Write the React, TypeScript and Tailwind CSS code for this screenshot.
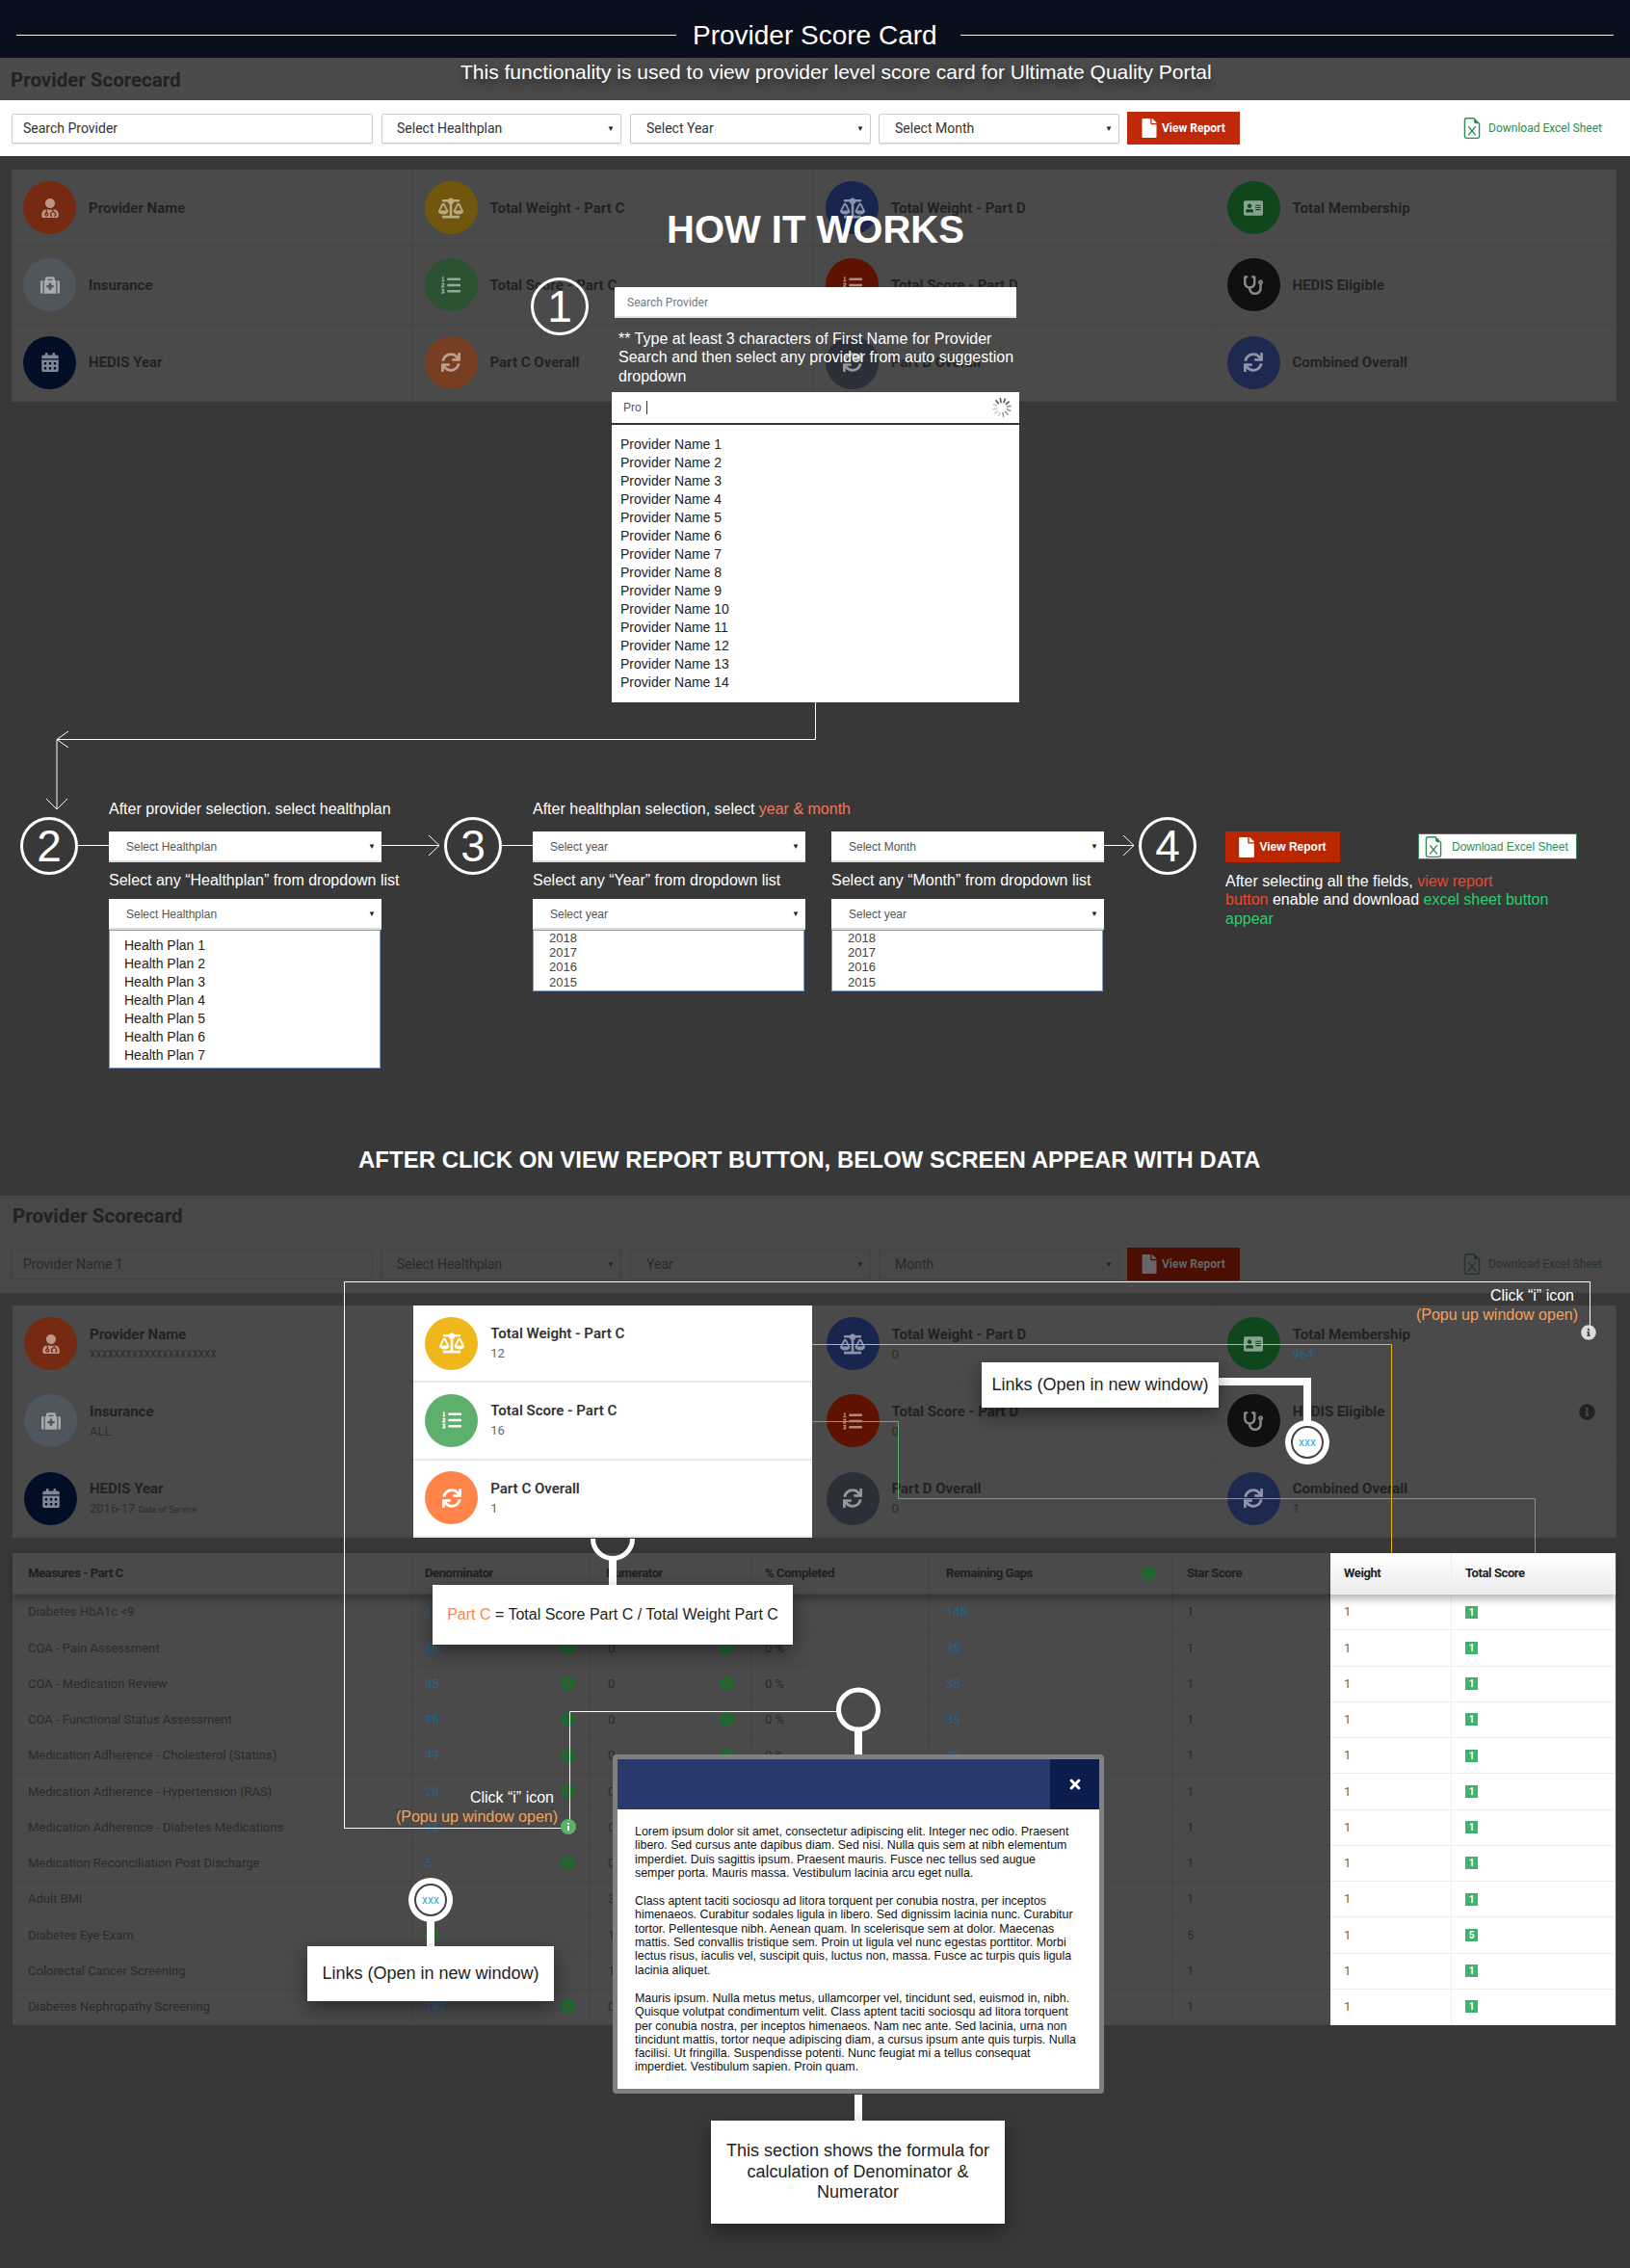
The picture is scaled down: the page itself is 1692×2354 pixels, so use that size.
import type { ReactNode } from 'react';
import {
  FaBalanceScale,
  FaListOl,
  FaSync,
  FaUserMd,
  FaMedkit,
  FaCalendarAlt,
  FaAddressCard,
  FaStethoscope,
  FaInfoCircle,
  FaFile,
  FaTimes,
} from 'react-icons/fa';
import { BsFileEarmarkExcel } from 'react-icons/bs';

const ARIAL = "font-['Liberation_Sans',Arial,sans-serif]";

const PROVIDERS = Array.from({ length: 14 }, (_, i) => `Provider Name ${i + 1}`);
const PLANS = Array.from({ length: 7 }, (_, i) => `Health Plan ${i + 1}`);
const YEARS = ['2018', '2017', '2016', '2015'];

const CARDS = [
  { label: 'Provider Name', value: 'XXXXXXXXXXXXXXXXXXXXX', icon: FaUserMd, dim: 'bg-[#762a12]', strike: true },
  { label: 'Total Weight - Part C', value: '12', icon: FaBalanceScale, dim: 'bg-[#71560d]', bright: 'bg-[#f0b71c]' },
  { label: 'Total Weight - Part D', value: '0', icon: FaBalanceScale, dim: 'bg-[#18264f]' },
  { label: 'Total Membership', value: '964', icon: FaAddressCard, dim: 'bg-[#0f461c]', link: true },
  { label: 'Insurance', value: 'ALL', icon: FaMedkit, dim: 'bg-[#50565d]' },
  { label: 'Total Score - Part C', value: '16', icon: FaListOl, dim: 'bg-[#2b5332]', bright: 'bg-[#5cb06b]' },
  { label: 'Total Score - Part D', value: '0', icon: FaListOl, dim: 'bg-[#5f1200]' },
  { label: 'HEDIS Eligible', value: '', icon: FaStethoscope, dim: 'bg-[#101010]' },
  { label: 'HEDIS Year', value: '2016-17', note: 'Date of Service', icon: FaCalendarAlt, dim: 'bg-[#020e26]' },
  { label: 'Part C Overall', value: '1', icon: FaSync, dim: 'bg-[#783e22]', bright: 'bg-[#ff8449]' },
  { label: 'Part D Overall', value: '0', icon: FaSync, dim: 'bg-[#2a2f38]' },
  { label: 'Combined Overall', value: '1', icon: FaSync, dim: 'bg-[#1e2950]' },
];

const MEASURES = [
  { name: 'Diabetes HbA1c <9', den: '145', num: '0', gaps: '145', star: '1', score: '1' },
  { name: 'COA - Pain Assessment', den: '36', num: '0', gaps: '35', star: '1', score: '1' },
  { name: 'COA - Medication Review', den: '35', num: '0', gaps: '35', star: '1', score: '1' },
  { name: 'COA - Functional Status Assessment', den: '35', num: '0', gaps: '35', star: '1', score: '1' },
  { name: 'Medication Adherence - Cholesterol (Statins)', den: '49', num: '0', gaps: '49', star: '1', score: '1' },
  { name: 'Medication Adherence - Hypertension (RAS)', den: '28', num: '0', gaps: '28', star: '1', score: '1' },
  { name: 'Medication Adherence - Diabetes Medications', den: '35', num: '0', gaps: '35', star: '1', score: '1' },
  { name: 'Medication Reconciliation Post Discharge', den: '5', num: '0', gaps: '5', star: '1', score: '1' },
  { name: 'Adult BMI', den: '', num: '3', gaps: '30', star: '1', score: '1' },
  { name: 'Diabetes Eye Exam', den: '', num: '1', gaps: '12', star: '5', score: '5' },
  { name: 'Colorectal Cancer Screening', den: '', num: '1', gaps: '14', star: '1', score: '1' },
  { name: 'Diabetes Nephropathy Screening', den: '147', num: '0', gaps: '147', star: '1', score: '1' },
];

const MODAL_TEXT = [
  [
    'Lorem ipsum dolor sit amet, consectetur adipiscing elit. Integer nec odio. Praesent',
    'libero. Sed cursus ante dapibus diam. Sed nisi. Nulla quis sem at nibh elementum',
    'imperdiet. Duis sagittis ipsum. Praesent mauris. Fusce nec tellus sed augue',
    'semper porta. Mauris massa. Vestibulum lacinia arcu eget nulla.',
  ],
  [
    'Class aptent taciti sociosqu ad litora torquent per conubia nostra, per inceptos',
    'himenaeos. Curabitur sodales ligula in libero. Sed dignissim lacinia nunc. Curabitur',
    'tortor. Pellentesque nibh. Aenean quam. In scelerisque sem at dolor. Maecenas',
    'mattis. Sed convallis tristique sem. Proin ut ligula vel nunc egestas porttitor. Morbi',
    'lectus risus, iaculis vel, suscipit quis, luctus non, massa. Fusce ac turpis quis ligula',
    'lacinia aliquet.',
  ],
  [
    'Mauris ipsum. Nulla metus metus, ullamcorper vel, tincidunt sed, euismod in, nibh.',
    'Quisque volutpat condimentum velit. Class aptent taciti sociosqu ad litora torquent',
    'per conubia nostra, per inceptos himenaeos. Nam nec ante. Sed lacinia, urna non',
    'tincidunt mattis, tortor neque adipiscing diam, a cursus ipsum ante quis turpis. Nulla',
    'facilisi. Ut fringilla. Suspendisse potenti. Nunc feugiat mi a tellus consequat',
    'imperdiet. Vestibulum sapien. Proin quam.',
  ],
];

export default function App() {
  return (
    <div className="relative h-[2354px] w-[1692px] overflow-hidden bg-[#383838] font-['Roboto',sans-serif]">
      {/* Title bar */}
      <div className={`flex h-[60px] items-center bg-[#0a0f1e] pl-[17px] pt-[13px] text-white ${ARIAL}`}>
        <div className="h-px w-[685px] bg-white" />
        <h1 className="ml-[17px] mr-[25px] w-[253px] whitespace-nowrap text-[28px] font-normal leading-none">Provider Score Card</h1>
        <div className="h-px w-[678px] bg-white" />
      </div>

      {/* Empty state screen */}
      <div className="relative flex h-[44px] items-center bg-[#4b4b4b] pl-[11px] pt-[3px]">
        <h2 className="text-[20.5px] font-bold text-[#222]">Provider Scorecard</h2>
        <p className={`absolute left-[478px] top-[2px] whitespace-nowrap text-[21px] leading-[26px] text-white [text-shadow:0_5px_10px_rgba(0,0,0,0.6)] ${ARIAL}`}>
          This functionality is used to view provider level score card for Ultimate Quality Portal
        </p>
      </div>
      <Toolbar search="Search Provider" year="Select Year" month="Select Month" />
      <div className="ml-[12px] mt-[14px] w-[1666px]">
        <CardGrid />
      </div>

      {/* Steps 2, 3 and 4 */}
      <div className={`ml-[21px] mt-[411px] flex h-[281px] items-start text-white ${ARIAL}`}>
        <StepCircle n="2" />
        <div className="mt-[49px] h-px w-[32px] bg-white" />
        <StepColumn
          title="After provider selection. select healthplan"
          placeholder="Select Healthplan"
          hint="Select any “Healthplan” from dropdown list"
          open="Select Healthplan"
          items={PLANS}
          roomy
        />
        <ArrowRight width={65} />
        <StepCircle n="3" />
        <div className="mt-[49px] h-px w-[32px] bg-white" />
        <StepColumn
          title={
            <>
              After healthplan selection, select <span className="text-[#f0795a]">year &amp; month</span>
            </>
          }
          placeholder="Select year"
          hint="Select any “Year” from dropdown list"
          open="Select year"
          items={YEARS}
        />
        <div className="w-[27px]" />
        <StepColumn title="" placeholder="Select Month" hint="Select any “Month” from dropdown list" open="Select year" items={YEARS} />
        <ArrowRight width={36} />
        <StepCircle n="4" />
        <div className="ml-[30px] mt-[35px]">
          <div className="flex items-start">
            <div className="flex h-[32px] w-[119px] items-center justify-center gap-[5px] bg-[#b92600] text-[12px] font-bold">
              <FaFile className="h-[21px] w-[16px]" />
              View Report
            </div>
            <div className="ml-[81px] mt-[2px] flex h-[27px] w-[165px] items-center gap-[8px] border border-[#2e8b57] bg-white pl-[4px] text-[12px] text-[#2e8b57]">
              <BsFileEarmarkExcel className="h-[22px] w-[22px]" />
              Download Excel Sheet
            </div>
          </div>
          <p className="mt-[10px] w-[400px] text-[16px] leading-[19.3px]">
            After selecting all the fields, <span className="text-[#e8482c]">view report</span>
            <br />
            <span className="text-[#e8482c]">button</span> enable and download <span className="text-[#2ecc71]">excel sheet button</span>
            <br />
            <span className="text-[#2ecc71]">appear</span>
          </p>
        </div>
      </div>

      <h2 className={`ml-[372px] mt-[80px] h-[30px] whitespace-nowrap text-[24px] font-bold leading-[30px] text-white ${ARIAL}`}>
        AFTER CLICK ON VIEW REPORT BUTTON, BELOW SCREEN APPEAR WITH DATA
      </h2>

      {/* Report screen */}
      <div className="mt-[22px] flex h-[41px] items-center bg-[#484848] pl-[13px] pt-[2px]">
        <h2 className="text-[20.5px] font-bold text-[#222]">Provider Scorecard</h2>
      </div>
      <Toolbar search="Provider Name 1" year="Year" month="Month" dimmed />
      <div className="ml-[13px] mt-[13px] w-[1665px]">
        <CardGrid filled />
        <MeasureTable />
      </div>

      <Connectors />

      {/* How it works overlay */}
      <div className={`absolute left-[551px] top-[218px] w-[510px] text-white ${ARIAL}`}>
        <div className="ml-[141px] h-[40px] whitespace-nowrap text-[40px] font-bold leading-[40px]">HOW IT WORKS</div>
        <div className="mt-[30px] flex">
          <div className="w-[84px]">
            <StepCircle n="1" flush />
          </div>
          <div className="w-[423px] pt-[10px]">
            <div className="mx-[3px] flex h-[32px] items-center border-b-2 border-[#e5e5e5] bg-white pl-[13px] pt-[1px] font-['Roboto',sans-serif] text-[12px] text-[#6b7b84]">Search Provider</div>
            <p className="mt-[12px] pl-[7px] text-[16px] leading-[19.3px]">
              ** Type at least 3 characters of First Name for Provider
              <br />
              Search and then select any provider from auto suggestion
              <br />
              dropdown
            </p>
            <div className="mt-[7px] flex h-[32px] items-center justify-between bg-white pl-[12px] pr-[7px] text-[12px] text-[#555]">
              <span className="border-r border-[#333] pr-[5px] leading-[14px]">Pro</span>
              <Spinner />
            </div>
            <div className="h-[2px] bg-[#2e3a3a]" />
            <div className="h-[288px] bg-white pl-[9px] pt-[11px] text-[14px] leading-[19px] text-[#222]">
              {PROVIDERS.map(name => (
                <div key={name}>{name}</div>
              ))}
            </div>
          </div>
        </div>
      </div>

      {/* Callouts */}
      <div className={`absolute right-[54px] top-[1335px] text-right text-[16px] leading-[19.5px] text-white ${ARIAL}`}>
        <div className="pr-[4px]">Click “i” icon</div>
        <div className="text-[#f6a05a]">(Popu up window open)</div>
      </div>
      <div className={`absolute left-[360px] top-[1856px] w-[219px] text-right text-[16px] leading-[19.5px] text-white ${ARIAL}`}>
        <div className="pr-[4px]">Click “i” icon</div>
        <div className="text-[#f6a05a]">(Popu up window open)</div>
      </div>
      <Callout className="left-[1019px] top-[1414px] h-[47px] w-[246px] text-[18px]">Links (Open in new window)</Callout>
      <Callout className="left-[319px] top-[2020px] h-[57px] w-[256px] text-[18px]">Links (Open in new window)</Callout>
      <Callout className="left-[449px] top-[1645px] h-[62px] w-[374px] whitespace-nowrap text-[16px]">
        <span className="text-[#ff8449]">Part C</span> = Total Score Part C / Total Weight Part C
      </Callout>
      <Callout className="left-[738px] top-[2201px] h-[107px] w-[305px] text-center text-[18px] leading-[21.5px]">
        This section shows the formula for
        <br />
        calculation of Denominator &amp;
        <br />
        Numerator
      </Callout>
      <LinkBadge className="left-[1334px] top-[1474px]" />
      <LinkBadge className="left-[424px] top-[1949px]" />

      {/* Formula modal */}
      <div className={`absolute left-[636px] top-[1821px] w-[510px] rounded-[4px] border-[5px] border-[#808080] ${ARIAL}`}>
        <div className="flex h-[52px] justify-end bg-[#2a3a6e]">
          <div className="flex w-[51px] items-center justify-center bg-[#0c1c4d] text-white">
            <FaTimes className="h-[16px] w-[16px]" />
          </div>
        </div>
        <div className="flex h-[290px] flex-col gap-[15px] bg-white pl-[18px] pt-[16px] text-[12.4px] leading-[14.3px] text-[#111]">
          {MODAL_TEXT.map(paragraph => (
            <p key={paragraph[0]}>
              {paragraph.map(line => (
                <span key={line} className="block whitespace-nowrap">
                  {line}
                </span>
              ))}
            </p>
          ))}
        </div>
      </div>
    </div>
  );
}

function Toolbar({ search, year, month, dimmed = false }: { search: string; year: string; month: string; dimmed?: boolean }) {
  const field = dimmed
    ? 'flex h-[31px] items-center rounded-[2px] border border-[#424242] pt-[1px] text-[14px] text-[#2a2a2a]'
    : 'flex h-[31px] items-center rounded-[2px] border border-[#ccc] bg-white pt-[1px] text-[14px] text-[#333] shadow-[0_1px_1px_rgba(0,0,0,0.1)]';
  return (
    <div className={dimmed ? 'flex h-[60px] items-center bg-[#484848] pl-[12px] pr-[29px]' : 'flex h-[58px] items-center bg-white pl-[12px] pr-[29px]'}>
      <div className={`${field} w-[375px] pl-[11px]`}>{search}</div>
      <div className={`${field} ml-[9px] w-[249px] justify-between pl-[15px] pr-[6px]`}>
        Select Healthplan <Caret />
      </div>
      <div className={`${field} ml-[9px] w-[250px] justify-between pl-[16px] pr-[6px]`}>
        {year} <Caret />
      </div>
      <div className={`${field} ml-[8px] w-[250px] justify-between pl-[16px] pr-[6px]`}>
        {month} <Caret />
      </div>
      <div
        className={
          dimmed
            ? 'ml-[8px] flex h-[34px] w-[117px] items-center gap-[5px] bg-[#4a0e03] pl-[15px] text-[12px] font-bold text-[#666]'
            : 'ml-[8px] flex h-[34px] w-[117px] items-center gap-[5px] bg-[#c0280a] pl-[15px] text-[12px] font-bold text-white'
        }
      >
        <FaFile className="h-[20px] w-[16px]" />
        View Report
      </div>
      <div className={dimmed ? 'ml-auto flex items-center gap-[6px] text-[12px] text-[#26332c]' : 'ml-auto flex items-center gap-[6px] text-[12px] text-[#2e8b57]'}>
        <BsFileEarmarkExcel className="h-[22px] w-[22px]" />
        Download Excel Sheet
      </div>
    </div>
  );
}

function Caret() {
  return <span className="text-[8px] leading-none text-[#222]">▼</span>;
}

function CardGrid({ filled = false }: { filled?: boolean }) {
  return (
    <div className="grid h-[241px] grid-cols-4 grid-rows-3 bg-[#4a4a4a]">
      {CARDS.map(card => {
        const bright = filled && card.bright;
        const Icon = card.icon;
        const size = Icon === FaBalanceScale ? 'h-[26px] w-[26px]' : 'h-[20px] w-[20px]';
        return (
          <div
            key={card.label}
            className={
              bright
                ? 'relative z-20 mr-[3px] flex items-center gap-[13px] border-b-2 border-[#e8e8e8] bg-white pl-[12px]'
                : 'relative flex items-center gap-[13px] border-b border-r border-[#454545] pl-[12px]'
            }
          >
            <div className={`flex h-[55px] w-[55px] shrink-0 items-center justify-center rounded-full text-white ${bright ? card.bright : card.dim}`}>
              <Icon className={bright ? size : `${size} opacity-50`} />
            </div>
            <div>
              <div className={bright ? 'text-[15px] font-semibold leading-[20px] text-[#333]' : 'text-[15px] font-bold leading-[20px] text-[#222]'}>{card.label}</div>
              {filled && <CardValue bright={!!bright} value={card.value} link={card.link} note={card.note} strike={card.strike} />}
            </div>
            {filled && card.label === 'HEDIS Eligible' && <FaInfoCircle className="absolute right-[21px] top-[22px] h-[17px] w-[17px] text-[#222]" />}
            {filled && card.label === 'Total Membership' && <FaInfoCircle className="absolute right-[20px] top-[20px] h-[16px] w-[16px] text-[#ddd]" />}
          </div>
        );
      })}
    </div>
  );
}

function CardValue({ bright, value, link, note, strike }: { bright: boolean; value: string; link?: boolean; note?: string; strike?: boolean }) {
  if (link) return <div className="mt-[2px] h-[18px] text-[13px] leading-[18px] text-[#23638f]">{value}</div>;
  if (strike) return <div className="mt-[2px] h-[18px] text-[10px] leading-[18px] text-[#2a2a2a]">{value}</div>;
  return (
    <div className={bright ? 'mt-[2px] h-[18px] text-[13px] leading-[18px] text-[#666]' : 'mt-[2px] h-[18px] text-[13px] leading-[18px] text-[#2d2d2d]'}>
      {value} {note && <span className="text-[9px]">{note}</span>}
    </div>
  );
}

function MeasureTable() {
  const row = 'grid grid-cols-[415px_185px_167px_185px_252px_164px_126px_170px]';
  const cell = 'flex items-center border-b border-r border-[#454545]';
  const brightCell = 'flex items-center border-b border-r border-[#eee] pl-[14px]';
  return (
    <div className="mt-[16px] bg-[#4a4a4a] text-[13px]">
      <div className={`${row} relative z-[5] h-[43px] font-bold tracking-[-0.4px] text-[#1f1f1f] shadow-[0_5px_8px_rgba(0,0,0,0.28)]`}>
        <div className={`${cell} pl-[16px]`}>Measures - Part C</div>
        <div className={`${cell} pl-[13px]`}>Denominator</div>
        <div className={`${cell} pl-[16px]`}>Numerator</div>
        <div className={`${cell} pl-[14px]`}>% Completed</div>
        <div className={`${cell} justify-between pl-[17px] pr-[16px]`}>
          Remaining Gaps <FaInfoCircle className="h-[15px] w-[15px] text-[#1c6b2c]" />
        </div>
        <div className={`${cell} pl-[15px]`}>Star Score</div>
        <div className={`${brightCell} bg-gradient-to-b from-white to-[#ececec]`}>Weight</div>
        <div className={`${brightCell} bg-gradient-to-b from-white to-[#ececec]`}>Total Score</div>
      </div>
      {MEASURES.map(m => (
        <div key={m.name} className={`${row} h-[37.25px]`}>
          <div className={`${cell} pl-[16px] text-[#2b2b2b]`}>{m.name}</div>
          <div className={`${cell} justify-between pl-[13px] pr-[15px] text-[#23638f]`}>
            {m.den} <FaInfoCircle className="h-[15px] w-[15px] text-[#1c6b2c]" />
          </div>
          <div className={`${cell} justify-between pl-[18px] pr-[17px] text-[#2b2b2b]`}>
            {m.num} <FaInfoCircle className="h-[15px] w-[15px] text-[#1c6b2c]" />
          </div>
          <div className={`${cell} pl-[14px] text-[#2b2b2b]`}>0 %</div>
          <div className={`${cell} pl-[17px] text-[#23638f]`}>{m.gaps}</div>
          <div className={`${cell} pl-[15px] text-[#2b2b2b]`}>{m.star}</div>
          <div className={`${brightCell} bg-white text-[#666]`}>1</div>
          <div className={`${brightCell} bg-white`}>
            <span className="flex h-[13px] w-[13px] items-center justify-center bg-[#3cb371] text-[10px] font-bold text-white">{m.score}</span>
          </div>
        </div>
      ))}
    </div>
  );
}

function StepCircle({ n, flush = false }: { n: string; flush?: boolean }) {
  return (
    <div className={`${flush ? 'mt-0' : 'mt-[20px]'} flex h-[60px] w-[60px] shrink-0 items-center justify-center rounded-full border-[3px] border-white text-[46px] leading-none text-white ${ARIAL}`}>
      {n}
    </div>
  );
}

function StepColumn({
  title,
  placeholder,
  hint,
  open,
  items,
  roomy = false,
}: {
  title: ReactNode;
  placeholder: string;
  hint: string;
  open: string;
  items: string[];
  roomy?: boolean;
}) {
  const box = 'flex h-[32px] items-center justify-between bg-white pl-[18px] pr-[6px] pt-[1px] text-[12px] text-[#555] border-b-2 border-[#ddd]';
  return (
    <div className="w-[283px] shrink-0">
      <div className="h-[24px] whitespace-nowrap text-[16px] leading-[24px]">{title}</div>
      <div className={`mt-[11px] ${box}`}>
        {placeholder} <Caret />
      </div>
      <div className="flex h-[38px] items-center whitespace-nowrap text-[16px]">{hint}</div>
      <div className={box}>
        {open} <Caret />
      </div>
      <div
        className={
          roomy
            ? 'mr-px h-[144px] border border-[#7f9cc8] bg-white pl-[15px] pt-[6px] text-[14px] leading-[19px] text-[#222]'
            : 'mr-px h-[64px] border border-[#7f9cc8] bg-white pl-[16px] text-[13px] leading-[15.2px] text-[#444]'
        }
      >
        {items.map(item => (
          <div key={item}>{item}</div>
        ))}
      </div>
    </div>
  );
}

function ArrowRight({ width }: { width: number }) {
  return (
    <svg width={width} height={30} viewBox={`0 0 ${width} 30`} fill="none" stroke="white" className="mt-[35px] shrink-0">
      <path d={`M0 14.5H${width - 5}M${width - 16} 4L${width - 5} 14.5L${width - 16} 25`} />
    </svg>
  );
}

function Spinner() {
  const ticks = Array.from({ length: 12 }, (_, i) => i * 30);
  return (
    <svg width="22" height="22" viewBox="-11 -11 22 22">
      {ticks.map((deg, i) => (
        <line key={deg} x1="0" y1="-10" x2="0" y2="-5" stroke={i < 4 ? '#555' : i < 8 ? '#999' : '#ccc'} strokeWidth="1.6" transform={`rotate(${deg - 40})`} />
      ))}
    </svg>
  );
}

function Callout({ className, children }: { className: string; children: ReactNode }) {
  return (
    <div className={`absolute z-30 flex items-center justify-center bg-white text-[#222] shadow-[0_8px_20px_rgba(0,0,0,0.4)] ${ARIAL} ${className}`}>
      <div>{children}</div>
    </div>
  );
}

function LinkBadge({ className }: { className: string }) {
  return (
    <div className={`absolute z-30 flex h-[46px] w-[46px] items-center justify-center rounded-full bg-white ${className}`}>
      <div className="flex h-[34px] w-[34px] items-center justify-center rounded-full border-2 border-[#444] bg-white text-[12px] text-[#3fa9d6]">xxx</div>
    </div>
  );
}

// All the annotation lines that run across both screens
function Connectors() {
  return (
    <svg width="1692" height="2354" viewBox="0 0 1692 2354" fill="none" className="absolute left-0 top-0 z-10">
      <path d="M846.5 729V767.5H59V839" stroke="white" />
      <path d="M48 829L59 840L70 829M71 759L59 767.5L71 776" stroke="white" />

      <path d="M590.5 1897.5H357.5V1330.5H1650.5V1380" stroke="white" />
      <path d="M591.5 1896V1776.5H870" stroke="white" />

      <path d="M843 1395.5H1444.5V1612" stroke="#e6b422" />
      <path d="M843 1475.5H932.5V1555.5H1593.5V1612" stroke="#5fb06a" />

      <circle cx="891" cy="1774.5" r="20.5" stroke="white" strokeWidth="5" />
      <path d="M891 1797V1821M891 2174V2201" stroke="white" strokeWidth="8" />

      <path d="M615.5 1597A20.5 20.5 0 0 0 656.5 1597" stroke="white" strokeWidth="5" />
      <path d="M636 1616V1645" stroke="white" strokeWidth="8" />

      <path d="M1265 1434H1357V1476" stroke="white" strokeWidth="8" />
      <path d="M447 1990V2020" stroke="white" strokeWidth="8" />

      <circle cx="590" cy="1896" r="8" fill="#5cb06b" />
      <path d="M590 1892V1893.5M590 1895V1900" stroke="white" strokeWidth="2" />
    </svg>
  );
}
